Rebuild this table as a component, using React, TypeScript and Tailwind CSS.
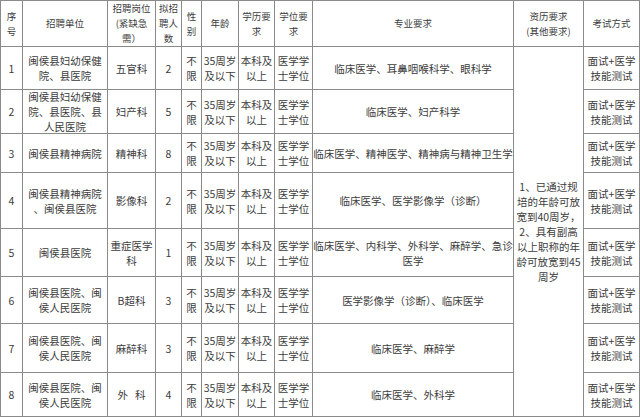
import React from "react";

const header: React.ReactNode[] = [
  <>序<br />号</>,
  <>招聘单位</>,
  <>招聘岗位<br />(紧缺急<br />需）</>,
  <>拟招<br />聘人<br />数</>,
  <>性<br />别</>,
  <>年龄</>,
  <>学历要<br />求</>,
  <>学位要<br />求</>,
  <>专业要求</>,
  <>资历要求<br />(其他要求)</>,
  <>考试方式</>,
];

type Row = {
  n: string;
  unit: React.ReactNode;
  post: React.ReactNode;
  num: string;
  major: React.ReactNode;
};

const rows: Row[] = [
  { n: "1", unit: <>闽侯县妇幼保健<br />院、县医院</>, post: "五官科", num: "2", major: "临床医学、耳鼻咽喉科学、眼科学" },
  { n: "2", unit: <>闽侯县妇幼保健<br />院、县医院、县<br />人民医院</>, post: "妇产科", num: "5", major: "临床医学、妇产科学" },
  { n: "3", unit: "闽侯县精神病院", post: "精神科", num: "8", major: "临床医学、精神医学、精神病与精神卫生学" },
  { n: "4", unit: <>闽侯县精神病院<br />、闽侯县医院</>, post: "影像科", num: "2", major: "临床医学、医学影像学（诊断）" },
  { n: "5", unit: "闽侯县医院", post: <>重症医学<br />科</>, num: "1", major: <>临床医学、内科学、外科学、麻醉学、急诊<br />医学</> },
  { n: "6", unit: <>闽侯县医院、闽<br />侯人民医院</>, post: "B超科", num: "3", major: "医学影像学（诊断）、临床医学" },
  { n: "7", unit: <>闽侯县医院、闽<br />侯人民医院</>, post: "麻醉科", num: "3", major: "临床医学、麻醉学" },
  { n: "8", unit: <>闽侯县医院、闽<br />侯人民医院</>, post: <>外&nbsp;&nbsp;&nbsp;科</>, num: "4", major: "临床医学、外科学" },
];

const cell = "bg-white flex items-center justify-center text-center leading-[15px] overflow-hidden";

export default function App() {
  return (
    <div
      className="w-[640px] h-[417px] bg-white text-[#3c3c3c]"
      style={{ fontFamily: '"Noto Sans CJK SC", "Noto Sans", sans-serif' }}
    >
      <div className="grid w-[640px] h-[417px] bg-[#8a8a8a] p-px gap-px grid-cols-[21px_84px_47px_25px_19px_36px_35px_37px_200px_69px_55px] grid-rows-[45px_42px_43px_38px_55px_47px_46px_48px_43px]">
        {header.map((h, i) => (
          <div key={"h" + i} className={cell + " text-[9.5px]"}>
            <div>{h}</div>
          </div>
        ))}
        {rows.map((r, i) => (
          <React.Fragment key={i}>
            <div className={cell + " text-[10.5px]"}>{r.n}</div>
            <div className={cell + " text-[10.5px]"}><div>{r.unit}</div></div>
            <div className={cell + " text-[10.5px]"}><div>{r.post}</div></div>
            <div className={cell + " text-[10.5px]"}>{r.num}</div>
            <div className={cell + " text-[10.5px]"}><div>不<br />限</div></div>
            <div className={cell + " text-[10.5px]"}><div>35周岁<br />及以下</div></div>
            <div className={cell + " text-[10.5px]"}><div>本科及<br />以上</div></div>
            <div className={cell + " text-[10.5px]"}><div>医学学<br />士学位</div></div>
            <div className={cell + " text-[10.5px] whitespace-nowrap"}><div>{r.major}</div></div>
            {i === 0 && (
              <div className={cell + " text-[10.5px] row-span-8"}>
                <div>
                  1、已通过规<br />培的年龄可放<br />宽到40周岁，<br />2、具有副高<br />以上职称的年<br />龄可放宽到45<br />周岁
                </div>
              </div>
            )}
            <div className={cell + " text-[10.5px]"}><div>面试+医学<br />技能测试</div></div>
          </React.Fragment>
        ))}
      </div>
    </div>
  );
}
